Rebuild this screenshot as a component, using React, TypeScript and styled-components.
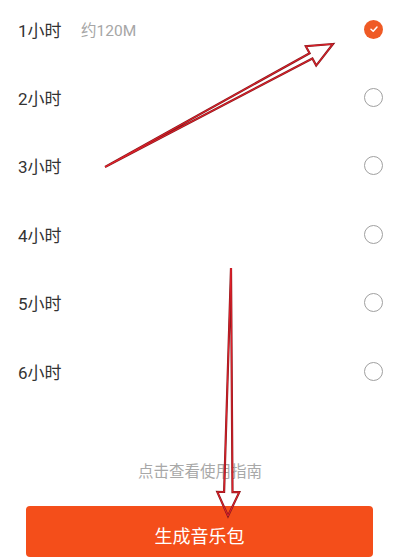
import React from "react";
import styled, { createGlobalStyle } from "styled-components";

const Global = createGlobalStyle`
  html, body { margin: 0; padding: 0; background: #fff; }
  body { font-family: Roboto, "Noto Sans CJK SC", "Noto Sans", sans-serif; }
`;

const Page = styled.div`
  position: relative;
  width: 400px;
  height: 557px;
  overflow: hidden;
  background: #fff;
  display: flex;
  flex-direction: column;
`;

const List = styled.div`
  margin-top: -5px;
  display: flex;
  flex-direction: column;
`;

const Row = styled.div`
  height: 68.4px;
  display: flex;
  align-items: center;
  padding: 0 18px;
`;

const Label = styled.span`
  font-size: 17px;
  color: #333;
  width: 63px;
`;

const Size = styled.span`
  font-size: 15.5px;
  color: #a6a6a6;
  flex: 1;
`;

const Radio = styled.span<{ $checked?: boolean }>`
  margin-left: auto;
  margin-right: -1px;
  width: 19px;
  height: 19px;
  box-sizing: border-box;
  border-radius: 50%;
  border: ${(p) => (p.$checked ? "none" : "1.5px solid #a0a0a0")};
  background: ${(p) => (p.$checked ? "#ef5a25" : "transparent")};
  display: flex;
  align-items: center;
  justify-content: center;
`;

const Guide = styled.div`
  margin-top: 56px;
  text-align: center;
  font-size: 15.5px;
  color: #a8a8a8;
  line-height: 22px;
`;

const Button = styled.div`
  margin: 23px 27px 0 26px;
  height: 70px;
  border-radius: 4px;
  background: #f44e1a;
  color: #fff;
  font-size: 18px;
  display: flex;
  justify-content: center;
  padding-top: 16px;
  box-sizing: border-box;
`;

const Overlay = styled.svg`
  position: absolute;
  left: 0;
  top: 0;
  pointer-events: none;
`;

const hours = ["1小时", "2小时", "3小时", "4小时", "5小时", "6小时"];

function arrowPoints(tx: number, ty: number, hx: number, hy: number, headLen: number, shaftHalf: number, headHalf: number) {
  const dx = hx - tx;
  const dy = hy - ty;
  const len = Math.hypot(dx, dy);
  const ux = dx / len;
  const uy = dy / len;
  const nx = -uy;
  const ny = ux;
  const bx = hx - ux * headLen;
  const by = hy - uy * headLen;
  const pts = [
    [tx, ty],
    [bx + nx * shaftHalf, by + ny * shaftHalf],
    [bx + nx * headHalf, by + ny * headHalf],
    [hx, hy],
    [bx - nx * headHalf, by - ny * headHalf],
    [bx - nx * shaftHalf, by - ny * shaftHalf],
  ];
  return pts.map((p) => p.map((v) => v.toFixed(1)).join(",")).join(" ");
}

export default function App() {
  const a1 = arrowPoints(105, 167, 333, 44, 25, 3, 11);
  const a2 = arrowPoints(231, 268, 228, 516, 24, 4.2, 11);
  return (
    <>
      <Global />
      <Page>
        <List>
          {hours.map((h, i) => (
            <Row key={h}>
              <Label>{h}</Label>
              {i === 0 && <Size>约120M</Size>}
              <Radio $checked={i === 0}>
                {i === 0 && (
                  <svg width="10" height="10" viewBox="0 0 10 10">
                    <path d="M2 5.2 L4.2 7.3 L8 3" fill="none" stroke="#fff" strokeWidth="1.5" strokeLinecap="round" strokeLinejoin="round" />
                  </svg>
                )}
              </Radio>
            </Row>
          ))}
        </List>
        <Guide>点击查看使用指南</Guide>
        <Button>生成音乐包</Button>
        <Overlay width="400" height="557" viewBox="0 0 400 557">
          <polygon points={a1} fill="none" stroke="#8a1a1e" strokeWidth="2.2" strokeLinejoin="miter" />
          <polygon points={a1} fill="none" stroke="#e3202a" strokeWidth="1" strokeLinejoin="miter" />
          <polygon points={a2} fill="none" stroke="#8a1a1e" strokeWidth="2.2" strokeLinejoin="miter" />
          <polygon points={a2} fill="none" stroke="#e3202a" strokeWidth="1" strokeLinejoin="miter" />
        </Overlay>
      </Page>
    </>
  );
}
